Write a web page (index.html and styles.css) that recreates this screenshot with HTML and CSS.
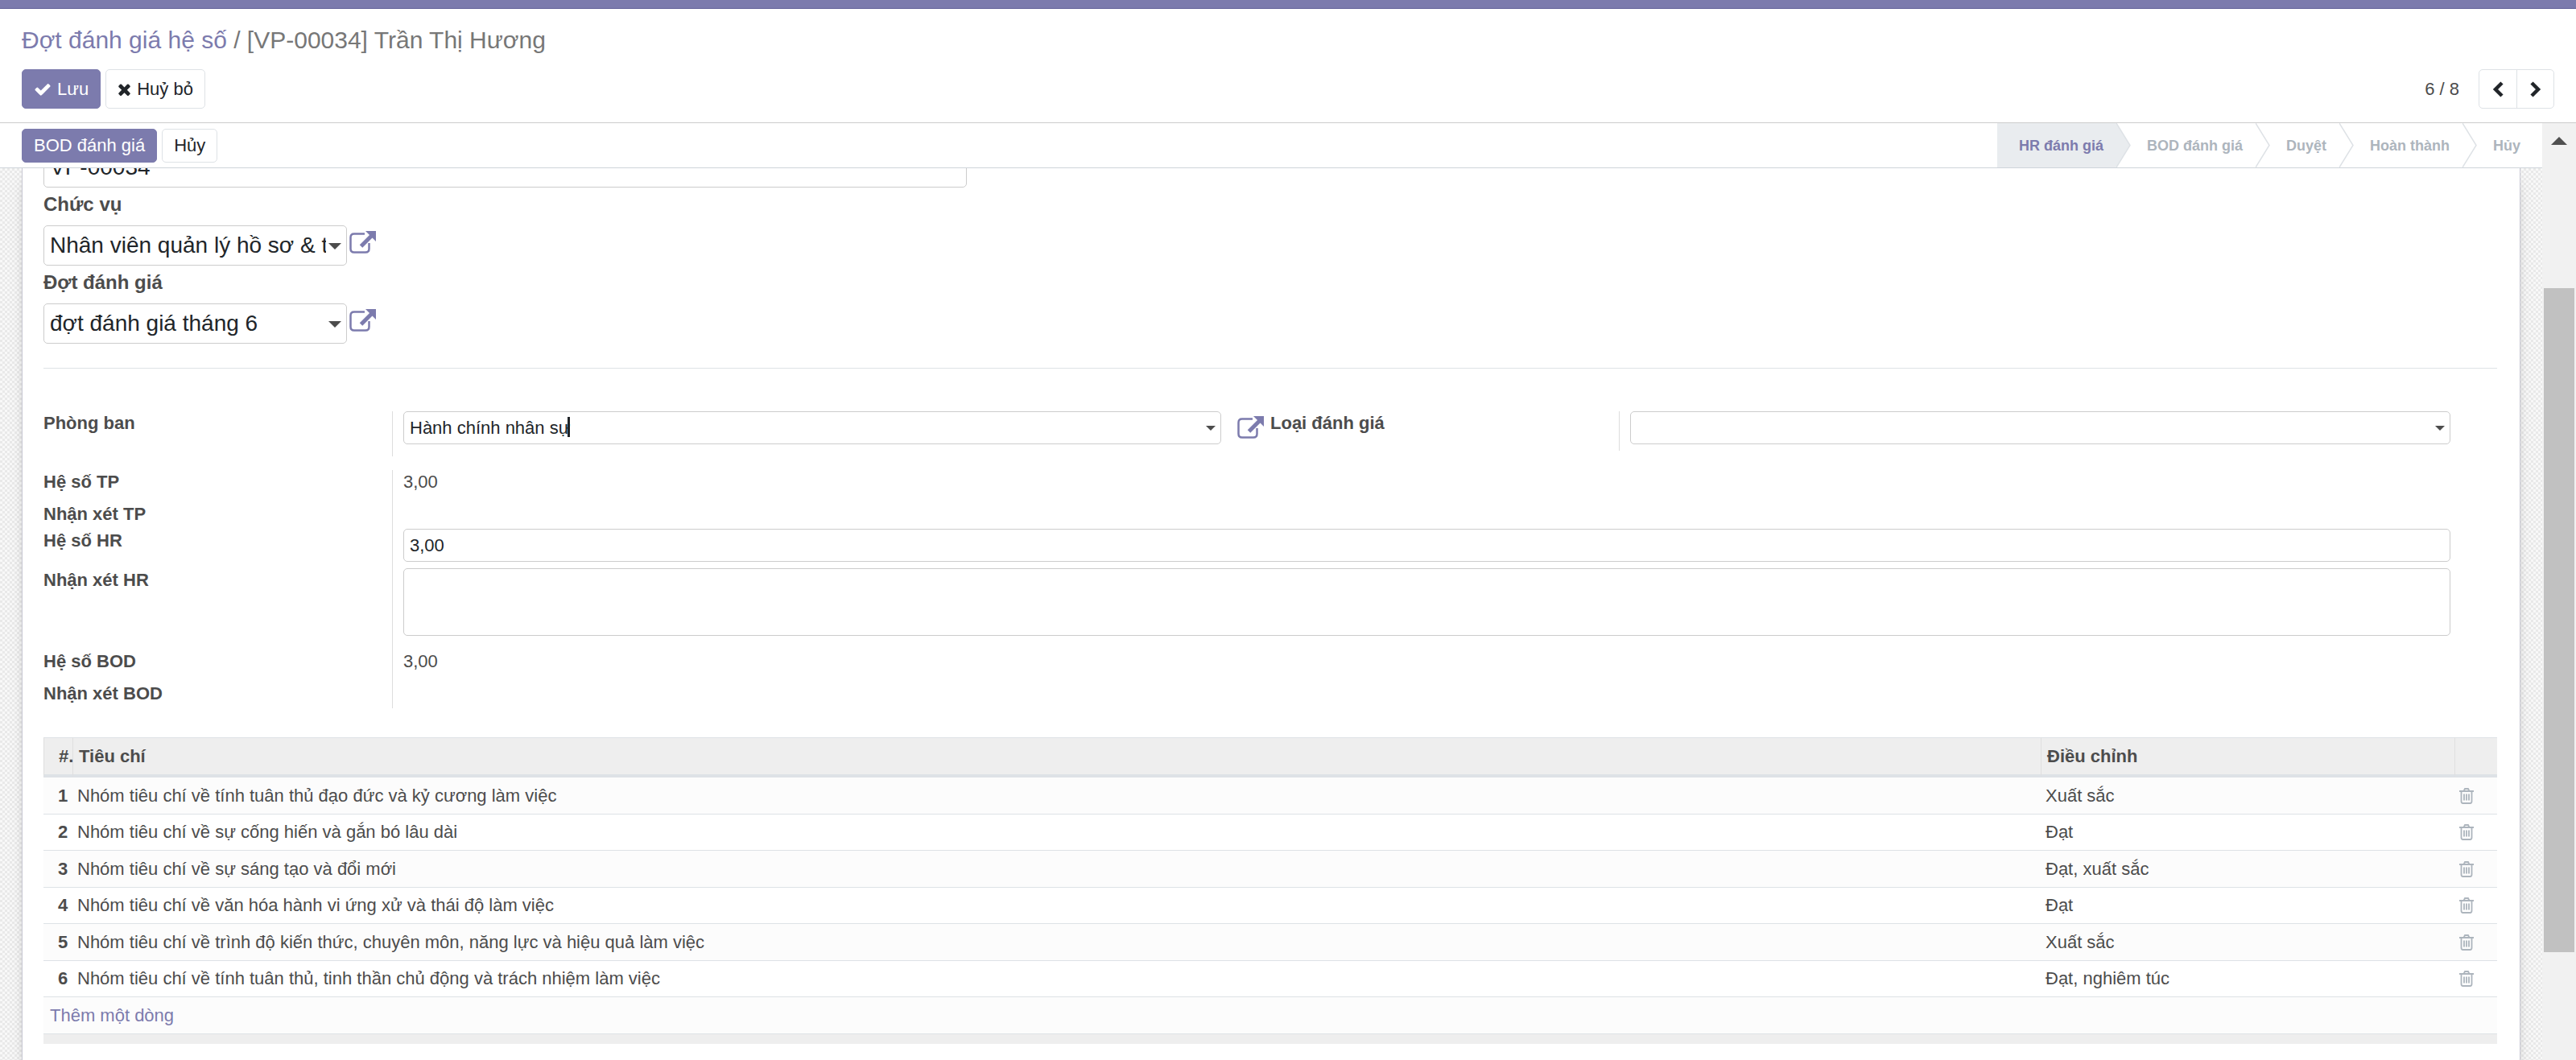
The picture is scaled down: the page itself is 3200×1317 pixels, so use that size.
FILE: index.html
```html
<!DOCTYPE html>
<html lang="vi">
<head>
<meta charset="UTF-8">
<meta name="viewport" content="width=device-width, initial-scale=1.0">
<title>Đợt đánh giá hệ số</title>
<link rel="stylesheet" href="styles.css">
</head>
<body>
  <!-- Icons -->
  <svg class="sprite" aria-hidden="true">
    <symbol id="icon-check" viewBox="0 0 1792 1792">
      <path d="M1671 566q0 40-28 68l-724 724-136 136q-28 28-68 28t-68-28l-136-136-362-362q-28-28-28-68t28-68l136-136q28-28 68-28t68 28l294 295 656-657q28-28 68-28t68 28l136 136q28 28 28 68z"/>
    </symbol>
    <symbol id="icon-times" viewBox="204 0 1384 1792">
      <path d="M1490 1322q0 40-28 68l-136 136q-28 28-68 28t-68-28l-294-294-294 294q-28 28-68 28t-68-28l-136-136q-28-28-28-68t28-68l294-294-294-294q-28-28-28-68t28-68l136-136q28-28 68-28t68 28l294 294 294-294q28-28 68-28t68 28l136 136q28 28 28 68t-28 68l-294 294 294 294q28 28 28 68z"/>
    </symbol>
    <symbol id="icon-link" viewBox="0 0 34 28">
      <path d="M19 3.500H6Q1.500 3.500 1.500 8V22Q1.500 26.500 6 26.500H20Q24.500 26.500 24.500 22V15" fill="none" stroke="currentColor" stroke-width="2.500"/>
      <path d="M14.500 19L28 5.500" fill="none" stroke="currentColor" stroke-width="5"/>
      <path d="M20 0H33V13Z"/>
    </symbol>
    <symbol id="icon-trash" viewBox="0 0 18 20">
      <path d="M0 4H18M5.500 4L7 1H11L12.500 4M2.500 4V16.500Q2.500 19 4.500 19H13.500Q15.500 19 15.500 16.500V4M6 7.500V15.500M9 7.500V15.500M12 7.500V15.500" fill="none" stroke="currentColor" stroke-width="1.800"/>
    </symbol>
    <symbol id="icon-prev" viewBox="0 0 14 20">
      <path d="M12 2L4 10L12 18" fill="none" stroke="currentColor" stroke-width="4.500"/>
    </symbol>
    <symbol id="icon-next" viewBox="0 0 14 20">
      <path d="M2 2L10 10L2 18" fill="none" stroke="currentColor" stroke-width="4.500"/>
    </symbol>
    <symbol id="icon-caret" viewBox="0 0 14 7" preserveAspectRatio="none">
      <path d="M0 0H14L7 7Z"/>
    </symbol>
    <symbol id="icon-step" viewBox="0 0 18 55" preserveAspectRatio="none">
      <path d="M0 0L17 27.500L0 55" stroke="#dee2e6" stroke-width="1.500"/>
    </symbol>
  </svg>

  <div class="navbar"></div>

  <!-- Control panel -->
  <header class="control-panel">
    <h1 class="breadcrumb"><a href="#">Đợt đánh giá hệ số</a> / [VP-00034] Trần Thị Hương</h1>
    <div class="toolbar">
      <div class="buttons">
        <button type="button" class="btn btn-primary btn-tall"><svg class="icon"><use href="#icon-check"/></svg>Lưu</button>
        <button type="button" class="btn btn-tall"><svg class="icon icon-narrow"><use href="#icon-times"/></svg>Huỷ bỏ</button>
      </div>
      <div class="pager">
        <span>6 / 8</span>
        <div class="pager-buttons">
          <button type="button" aria-label="Trước"><svg><use href="#icon-prev"/></svg></button>
          <button type="button" aria-label="Sau"><svg><use href="#icon-next"/></svg></button>
        </div>
      </div>
    </div>
  </header>

  <div class="content">
    <main class="form-view">
      <!-- Status bar -->
      <div class="statusbar">
        <div class="buttons">
          <button type="button" class="btn btn-primary">BOD đánh giá</button>
          <button type="button" class="btn">Hủy</button>
        </div>
        <ol class="steps">
          <li class="active">HR đánh giá<svg><use href="#icon-step"/></svg></li>
          <li>BOD đánh giá<svg><use href="#icon-step"/></svg></li>
          <li>Duyệt<svg><use href="#icon-step"/></svg></li>
          <li>Hoàn thành<svg><use href="#icon-step"/></svg></li>
          <li>Hủy</li>
        </ol>
      </div>

      <div class="sheet-bg">
        <form class="sheet">
          <div class="title">
            <input type="text" class="field field-large" value="VP-00034" aria-label="Mã">
            <label for="job">Chức vụ</label>
            <div class="many2one">
              <div class="dropdown">
                <select id="job" class="field field-large"><option>Nhân viên quản lý hồ sơ &amp; tuyển dụng</option></select>
                <svg class="caret"><use href="#icon-caret"/></svg>
              </div>
              <a href="#" class="external" aria-label="Mở"><svg><use href="#icon-link"/></svg></a>
            </div>
            <label for="period">Đợt đánh giá</label>
            <div class="many2one">
              <div class="dropdown">
                <select id="period" class="field field-large"><option>đợt đánh giá tháng 6</option></select>
                <svg class="caret"><use href="#icon-caret"/></svg>
              </div>
              <a href="#" class="external" aria-label="Mở"><svg><use href="#icon-link"/></svg></a>
            </div>
          </div>

          <hr>

          <div class="group group-half">
            <div class="row">
              <label for="department">Phòng ban</label>
              <div class="value value-linked">
                <div class="dropdown">
                  <input type="text" id="department" class="field" value="Hành chính nhân sự">
                  <span class="cursor"></span>
                  <svg class="caret"><use href="#icon-caret"/></svg>
                </div>
                <a href="#" class="external" aria-label="Mở"><svg><use href="#icon-link"/></svg></a>
              </div>
            </div>
            <div class="row">
              <label for="kind">Loại đánh giá</label>
              <div class="value value-plain">
                <div class="dropdown">
                  <select id="kind" class="field"><option></option></select>
                  <svg class="caret"><use href="#icon-caret"/></svg>
                </div>
              </div>
            </div>
          </div>

          <div class="group">
            <div class="row"><span class="label">Hệ số TP</span><div class="value readonly">3,00</div></div>
            <div class="row row-empty"><span class="label">Nhận xét TP</span><div class="value"></div></div>
            <div class="row"><label for="hr">Hệ số HR</label><div class="value"><input type="text" id="hr" class="field" value="3,00"></div></div>
            <div class="row"><label for="hr-note">Nhận xét HR</label><div class="value value-note"><textarea id="hr-note" class="field"></textarea></div></div>
            <div class="row"><span class="label">Hệ số BOD</span><div class="value readonly">3,00</div></div>
            <div class="row row-empty"><span class="label">Nhận xét BOD</span><div class="value"></div></div>
          </div>

          <!-- Criteria -->
          <table class="lines">
            <thead>
              <tr><th class="col-no">#.</th><th>Tiêu chí</th><th class="col-rate">Điều chỉnh</th><th class="col-del"></th></tr>
            </thead>
            <tbody>
              <tr><td class="no">1</td><td>Nhóm tiêu chí về tính tuân thủ đạo đức và kỷ cương làm việc</td><td>Xuất sắc</td><td><button type="button" class="trash" aria-label="Xóa"><svg><use href="#icon-trash"/></svg></button></td></tr>
              <tr><td class="no">2</td><td>Nhóm tiêu chí về sự cống hiến và gắn bó lâu dài</td><td>Đạt</td><td><button type="button" class="trash" aria-label="Xóa"><svg><use href="#icon-trash"/></svg></button></td></tr>
              <tr><td class="no">3</td><td>Nhóm tiêu chí về sự sáng tạo và đổi mới</td><td>Đạt, xuất sắc</td><td><button type="button" class="trash" aria-label="Xóa"><svg><use href="#icon-trash"/></svg></button></td></tr>
              <tr><td class="no">4</td><td>Nhóm tiêu chí về văn hóa hành vi ứng xử và thái độ làm việc</td><td>Đạt</td><td><button type="button" class="trash" aria-label="Xóa"><svg><use href="#icon-trash"/></svg></button></td></tr>
              <tr><td class="no">5</td><td>Nhóm tiêu chí về trình độ kiến thức, chuyên môn, năng lực và hiệu quả làm việc</td><td>Xuất sắc</td><td><button type="button" class="trash" aria-label="Xóa"><svg><use href="#icon-trash"/></svg></button></td></tr>
              <tr><td class="no">6</td><td>Nhóm tiêu chí về tính tuân thủ, tinh thần chủ động và trách nhiệm làm việc</td><td>Đạt, nghiêm túc</td><td><button type="button" class="trash" aria-label="Xóa"><svg><use href="#icon-trash"/></svg></button></td></tr>
              <tr><td colspan="4" class="add"><a href="#">Thêm một dòng</a></td></tr>
            </tbody>
            <tfoot>
              <tr><td colspan="4"></td></tr>
            </tfoot>
          </table>
        </form>
      </div>
    </main>

    <div class="scrollbar">
      <svg class="scroll-up" viewBox="0 0 20 10"><path d="M0 10L10 0L20 10Z"/></svg>
      <div class="scroll-track"><div class="scroll-thumb"></div></div>
    </div>
  </div>
</body>
</html>
```

FILE: styles.css
```css
* {
  box-sizing: border-box;
}
body {
  margin: 0;
  height: 100vh;
  display: flex;
  flex-direction: column;
  overflow: hidden;
  font-family: "Liberation Sans", Arial, sans-serif;
  font-size: 22px;
  line-height: 30px;
  color: #4c4c4c;
  background: #fff;
}
a {
  color: #7c7bad;
  text-decoration: none;
}
svg {
  display: block;
  fill: currentColor;
}
button,
input,
select,
textarea {
  font: inherit;
  margin: 0;
}
.sprite {
  display: none;
}

/* Header */
.navbar {
  height: 11px;
  flex: none;
  background: #7c7bad;
  border-bottom: 1px solid #5f5e97;
}
.control-panel {
  flex: none;
  padding: 16px 27px 17px;
  border-bottom: 1px solid #ccc;
}
.breadcrumb {
  margin: 0 0 14px;
  font-size: 30px;
  font-weight: normal;
  line-height: 45px;
  color: #777;
}
.toolbar {
  display: flex;
  justify-content: space-between;
  align-items: center;
}
.buttons {
  display: flex;
  align-items: center;
  gap: 6px;
}
.btn {
  display: flex;
  align-items: center;
  gap: 7px;
  height: 42px;
  padding: 0 14px;
  border: 1px solid #dee2e6;
  border-radius: 5px;
  background: #fff;
  color: #212529;
}
.btn-tall {
  height: 49px;
}
.btn-primary {
  background: #7c7bad;
  border-color: #7c7bad;
  color: #fff;
}
.icon {
  width: 22px;
  height: 22px;
}
.icon-narrow {
  width: 17px;
}
.pager {
  display: flex;
  align-items: center;
  gap: 24px;
}
.pager-buttons {
  display: flex;
  border: 1px solid #dee2e6;
  border-radius: 5px;
}
.pager-buttons button {
  display: flex;
  align-items: center;
  justify-content: center;
  width: 46px;
  height: 47px;
  border: 0;
  padding: 0;
  background: none;
  color: #212529;
}
.pager-buttons button + button {
  border-left: 1px solid #dee2e6;
}
.pager-buttons svg {
  width: 14px;
  height: 20px;
}

/* Content */
.content {
  flex: 1;
  min-height: 0;
  display: flex;
}
.form-view {
  flex: 1;
  min-width: 0;
  display: flex;
  flex-direction: column;
}
.statusbar {
  flex: none;
  display: flex;
  justify-content: space-between;
  align-items: stretch;
  height: 56px;
  padding-left: 27px;
  border-bottom: 1px solid #ced4da;
}
.steps {
  display: flex;
  margin: 0;
  padding: 0;
  list-style: none;
  font-size: 18px;
  font-weight: bold;
  color: #adb5bd;
}
.steps li {
  position: relative;
  display: flex;
  align-items: center;
  padding: 0 16px 0 38px;
}
.steps li:first-child {
  padding-left: 27px;
}
.steps li:last-child {
  padding-right: 27px;
}
.steps .active {
  background: #e9ecef;
  color: #7c7bad;
}
.steps svg {
  position: absolute;
  top: 0;
  left: 100%;
  width: 18px;
  height: 100%;
  z-index: 1;
  fill: #fff;
}
.steps .active svg {
  fill: #e9ecef;
}
.sheet-bg {
  flex: 1;
  min-height: 0;
  overflow: hidden;
  padding: 0 27px;
  background: repeating-conic-gradient(#e9e9e9 0 25%, #f8f8f8 0 50%) 0 0 / 6px 6px;
}
.sheet {
  display: flow-root;
  min-height: 100%;
  padding: 0 28px 40px 26px;
  border: solid #c8c8d3;
  border-width: 0 1px;
  background: #fff;
  box-shadow: 0 5px 20px -15px #000;
}

/* Fields */
.field {
  display: block;
  width: 100%;
  height: 41px;
  padding: 0 7px;
  border: 1px solid #ccc;
  border-radius: 5px;
  outline: 0;
  background: #fff;
  color: #212529;
}
select.field {
  appearance: none;
}
textarea.field {
  height: 84px;
  resize: none;
}
.field-large {
  height: 50px;
  font-size: 28px;
}
label,
.label {
  font-weight: bold;
}
.title {
  width: 1147px;
  margin-top: -26px;
}
.title label {
  display: block;
  height: 47px;
  padding-top: 6px;
  font-size: 24px;
}
.many2one {
  display: flex;
  gap: 3px;
}
.many2one .dropdown {
  width: 377px;
}
.many2one select {
  padding-right: 25px;
}
.many2one .external {
  padding-top: 7px;
}
.dropdown {
  position: relative;
}
.caret {
  position: absolute;
  right: 7px;
  top: 18px;
  width: 12px;
  height: 6px;
}
.many2one .caret {
  top: 22px;
  width: 16px;
  height: 8px;
}
.external svg {
  width: 34px;
  height: 28px;
}
.cursor {
  position: absolute;
  left: 204px;
  top: 7px;
  width: 3px;
  height: 25px;
  background: #212529;
}
hr {
  margin: 30px 0 53px;
  border: 0;
  border-top: 1px solid #dee2e6;
}

/* Groups */
.group {
  padding-right: 58px;
  margin-bottom: 36px;
}
.row {
  display: flex;
}
.row label,
.row .label {
  flex: none;
  width: 433px;
}
.value {
  flex: 1;
  min-width: 0;
  min-height: 40px;
  padding: 0 0 8px 13px;
  border-left: 1px solid #ddd;
}
.readonly {
  padding-bottom: 0;
}
.row-empty .value {
  min-height: 33px;
}
.value-note {
  padding-bottom: 17px;
}
.group-half {
  display: flex;
  align-items: flex-start;
  padding-right: 0;
  margin-bottom: 17px;
}
.group-half .row {
  flex: 1;
}
.value-linked {
  display: flex;
  gap: 20px;
  padding-right: 7px;
  padding-bottom: 15px;
}
.value-linked .dropdown {
  flex: 1;
}
.value-linked .external {
  padding-top: 6px;
}
.value-plain {
  padding-right: 58px;
}

/* Table */
.lines {
  width: 100%;
  border-collapse: separate;
  border-spacing: 0;
  table-layout: fixed;
}
.lines th {
  height: 50px;
  padding: 0 7px;
  border-top: 1px solid #dee2e6;
  border-bottom: 4px solid #dee2e6;
  border-left: 1px solid #dfdfdf;
  background: #eee;
  text-align: left;
}
.lines .col-no {
  width: 36px;
  padding: 0 0 0 18px;
}
.lines .col-rate {
  width: 514px;
}
.lines .col-del {
  width: 53px;
}
.lines td {
  height: 45px;
  padding: 0 6px;
  border-bottom: 1px solid #dee2e6;
}
.lines tbody tr:nth-child(odd) td {
  height: 46px;
  background: #fcfcfc;
}
.lines .no {
  padding: 0 0 0 18px;
  font-weight: bold;
}
.lines .add {
  padding-left: 8px;
}
.lines tfoot td {
  height: 12px;
  border: 0;
  background: #eee;
}
.trash {
  display: block;
  padding: 0;
  border: 0;
  background: none;
  color: #adb5bd;
}
.trash svg {
  width: 18px;
  height: 20px;
}

/* Scrollbar */
.scrollbar {
  flex: none;
  width: 42px;
  display: flex;
  flex-direction: column;
  background: #f1f1f1;
}
.scroll-up {
  width: 20px;
  height: 10px;
  margin: 17px auto 15px;
  fill: #505050;
}
.scroll-track {
  flex: 1;
  padding: 163px 2px 0;
}
.scroll-thumb {
  height: 86%;
  background: #c1c1c1;
}
```
